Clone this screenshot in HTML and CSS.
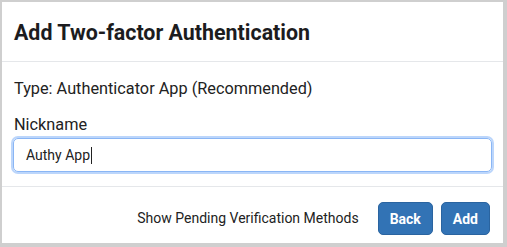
FILE: index.html
```html
<!DOCTYPE html>
<html>
<head>
<meta charset="utf-8">
<link rel="stylesheet" href="styles.css">
</head>
<body>
<div class="modal">
  <div class="header"><h1 class="title">Add Two-factor Authentication</h1></div>
  <div class="body">
    <p class="type">Type: Authenticator App (Recommended)</p>
    <label class="label" for="nick">Nickname</label>
    <div class="input"><span>Authy App</span><span class="caret"></span></div>
  </div>
  <div class="footer">
    <span class="pending">Show Pending Verification Methods</span>
    <button class="btn">Back</button>
    <button class="btn">Add</button>
  </div>
</div>
</body>
</html>
```

FILE: styles.css
```css
html, body { margin: 0; padding: 0; }
body {
  background: #cfcfcf;
  width: 507px;
  height: 247px;
  font-family: Roboto, "Liberation Sans", sans-serif;
  color: #222;
}
.modal {
  margin: 2px 4px 0 2px;
  height: 241px;
  background: #fff;
  display: flex;
  flex-direction: column;
  box-sizing: border-box;
}
.header {
  height: 60px;
  border-bottom: 1px solid #e5e7ea;
  display: flex;
  align-items: center;
  padding: 2px 12px 0 12px;
  box-sizing: border-box;
}
.title {
  margin: 0;
  font-size: 21.4px;
  font-weight: 700;
  color: #1c1c1e;
}
.body {
  padding: 17px 11px 14px 11px;
  border-bottom: 1px solid #e5e7ea;
  display: flex;
  flex-direction: column;
}
.type {
  margin: 0 0 16px 1px;
  font-size: 16.3px;
  line-height: 20px;
}
.label {
  font-size: 16.3px;
  line-height: 20px;
  margin: 0 0 3px 1px;
}
.input {
  height: 34px;
  box-sizing: border-box;
  border: 1px solid #8ab6f5;
  border-radius: 5px;
  box-shadow: 0 0 0 2px #bcd6fb;
  display: flex;
  align-items: center;
  padding: 0 12px;
  font-size: 14px;
  color: #222;
}
.caret {
  display: inline-block;
  width: 1px;
  height: 17px;
  background: #222;
  margin-left: 1px;
}
.footer {
  flex: 1;
  display: flex;
  align-items: flex-start;
  justify-content: flex-end;
  padding: 15px 13px 0 0;
  gap: 8px;
}
.pending {
  font-size: 14px;
  line-height: 33px;
  margin-right: 11px;
}
.btn {
  font-family: Roboto, "Liberation Sans", sans-serif;
  font-size: 14px;
  font-weight: 700;
  color: #fff;
  background: #3273b5;
  border: 1px solid #2a64a0;
  border-radius: 5px;
  height: 33px;
  padding: 0 11px;
}
```
